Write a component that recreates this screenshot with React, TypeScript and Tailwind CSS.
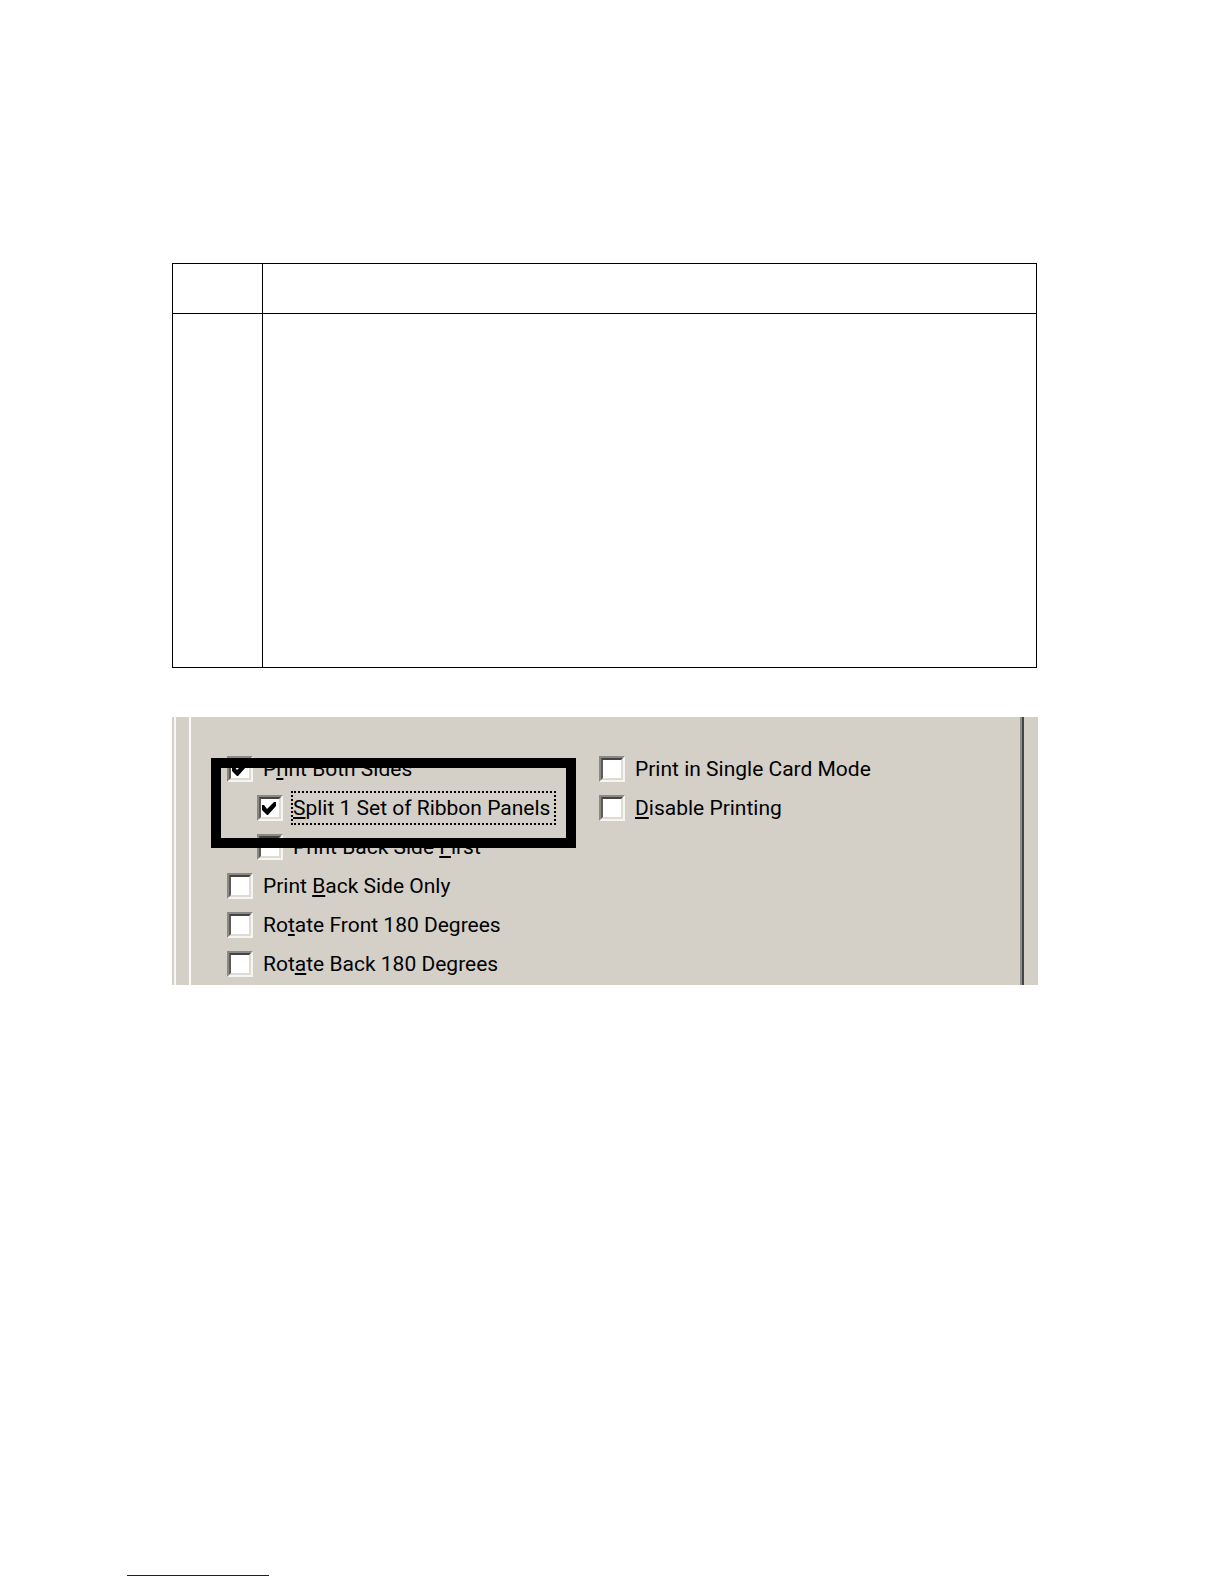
import type { ReactNode } from "react";

type OptionProps = {
  id: string;
  checked?: boolean;
  nested?: boolean;
  focused?: boolean;
  children: ReactNode;
};

function Option({ id, checked = false, nested = false, focused = false, children }: OptionProps) {
  return (
    <div className={nested ? "flex h-[39px] items-center gap-2 pl-[30px]" : "flex h-[39px] items-center gap-2"}>
      <span className="relative block size-[26px] shrink-0 border-2 border-t-[#8b8984] border-r-[#f6f5f2] border-b-[#f6f5f2] border-l-[#8b8984]">
        <input
          id={id}
          type="checkbox"
          defaultChecked={checked}
          className="peer block size-full appearance-none border-2 border-t-[#454442] border-r-[#dedbd5] border-b-[#dedbd5] border-l-[#5c5b58] bg-white outline-none"
        />
        <svg
          viewBox="0 0 22 22"
          className="pointer-events-none absolute inset-0 hidden size-full peer-checked:block"
          aria-hidden="true"
        >
          <path d="M3 8 L5 8 L8 12 L15 5 L17 5 V9 L9 18 H8 L3 13 Z" fill="#000" />
        </svg>
      </span>
      <label
        htmlFor={id}
        className={
          focused
            ? "border-2 border-dotted border-black py-px pr-1 leading-7 whitespace-nowrap"
            : "border-2 border-transparent py-px pr-1 leading-7 whitespace-nowrap"
        }
      >
        {children}
      </label>
    </div>
  );
}

function Key({ children }: { children: ReactNode }) {
  return <span className="underline decoration-2 underline-offset-2 [text-decoration-skip-ink:none]">{children}</span>;
}

export default function App() {
  return (
    <main className="flex min-h-screen flex-col bg-white pt-[263px] pr-[186px] pl-[172px]">
      <table className="mr-px border-collapse border border-black">
        <tbody>
          <tr className="h-[50px]">
            <td className="w-[90px] border border-black" />
            <td className="border border-black" />
          </tr>
          <tr className="h-[354px]">
            <td className="border border-black" />
            <td className="border border-black" />
          </tr>
        </tbody>
      </table>

      <section className="mt-[49px] bg-[#d4d0c8] pl-[2px] font-[Roboto,sans-serif] text-[21px] text-black">
        <div className="border-l-2 border-[#f7f6f4] pr-[14px] pl-[13px]">
          <div className="border-r-2 border-l-2 border-r-[#454545] border-l-[#fbfaf8]">
            <form className="relative grid grid-cols-[372px_1fr] border-r-2 border-[#8f8e8a] pt-8 pb-[2px] pl-9">
              <div>
                <Option id="both" checked>
                  P<Key>r</Key>int Both Sides
                </Option>
                <Option id="split" checked nested focused>
                  <Key>S</Key>plit 1 Set of Ribbon Panels
                </Option>
                <Option id="back-first" nested>
                  Print Back Side <Key>F</Key>irst
                </Option>
                <Option id="back-only">
                  Print <Key>B</Key>ack Side Only
                </Option>
                <Option id="rotate-front">
                  Ro<Key>t</Key>ate Front 180 Degrees
                </Option>
                <Option id="rotate-back">
                  Rot<Key>a</Key>te Back 180 Degrees
                </Option>
              </div>
              <div>
                <Option id="single">Print in Single Card Mode</Option>
                <Option id="disable">
                  <Key>D</Key>isable Printing
                </Option>
              </div>
              <div className="pointer-events-none absolute top-[41px] left-5 h-[90px] w-[365px] border-10 border-black" />
            </form>
          </div>
        </div>
      </section>

      <hr className="mt-auto mb-2 -ml-[45px] h-px w-[142px] border-0 bg-[#15157a]" />
    </main>
  );
}
